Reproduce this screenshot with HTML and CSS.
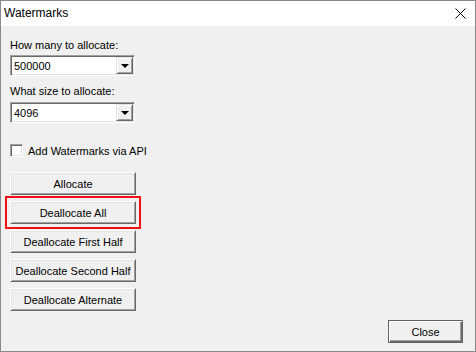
FILE: index.html
```html
<!DOCTYPE html>
<html>
<head>
    <meta charset="UTF-8">
    <title>Watermarks</title>
    <link rel="stylesheet" href="styles.css">
</head>
<body>
    <div class="window">
        <div class="titlebar">
            <span class="title">Watermarks</span>
            <svg class="closeX" width="11" height="11" viewBox="0 0 11 11">
                <path d="M0.5 0.5 L10.5 10.5 M10.5 0.5 L0.5 10.5" stroke="#000" stroke-width="1" fill="none"/>
            </svg>
        </div>
        <div class="client">
            <div class="label first">How many to allocate:</div>
            <div class="combo combo1">
                <span class="comboText">500000</span>
                <span class="dropBtn"><span class="arrow"></span></span>
            </div>
            <div class="label second">What size to allocate:</div>
            <div class="combo combo2">
                <span class="comboText">4096</span>
                <span class="dropBtn"><span class="arrow"></span></span>
            </div>
            <div class="checkRow">
                <span class="checkBox"></span>
                <span class="checkText">Add Watermarks via API</span>
            </div>
            <div class="btnList">
                <button class="winButton">Allocate</button>
                <button class="winButton marked">Deallocate All</button>
                <button class="winButton">Deallocate First Half</button>
                <button class="winButton">Deallocate Second Half</button>
                <button class="winButton">Deallocate Alternate</button>
            </div>
            <div class="footer">
                <button class="winButton closeButton">Close</button>
            </div>
        </div>
    </div>
</body>
</html>
```

FILE: styles.css
```css
body {
    margin: 0;
    background-color: #f0f0f0;
    font-family: "Liberation Sans", Arial, sans-serif;
    font-size: 11px;
    color: #000;
}
.window {
    width: 476px;
    height: 352px;
    box-sizing: border-box;
    border: 1px solid #8a8a8a;
    display: flex;
    flex-direction: column;
    background-color: #f0f0f0;
}
.titlebar {
    height: 25px;
    background-color: #fff;
    display: flex;
    align-items: center;
    justify-content: space-between;
    padding: 0 9px 0 3px;
}
.title {
    font-size: 12px;
    margin-top: -1px;
}
.closeX {
    margin-top: -1px;
}
.client {
    flex: 1;
    display: flex;
    flex-direction: column;
    padding: 13px 12px 8px 9px;
}
.label {
    line-height: 13px;
    height: 13px;
}
.label.second {
    margin-top: 9px;
}
.combo {
    width: 125px;
    height: 21px;
    box-sizing: border-box;
    background-color: #fff;
    border: 1px solid;
    border-color: #a0a0a0 #fff #fff #a0a0a0;
    box-shadow: inset 1px 1px #696969, inset -1px -1px #e3e3e3;
    display: flex;
    align-items: center;
    padding: 1px;
}
.combo1 {
    margin-top: 3px;
}
.combo2 {
    margin-top: 4px;
}
.comboText {
    flex: 1;
    padding-left: 2px;
    padding-top: 1px;
}
.dropBtn {
    width: 17px;
    height: 17px;
    box-sizing: border-box;
    background-color: #f0f0f0;
    border: 1px solid;
    border-color: #e3e3e3 #696969 #696969 #e3e3e3;
    box-shadow: inset 1px 1px #fff, inset -1px -1px #a0a0a0;
    display: flex;
    align-items: center;
    justify-content: center;
}
.arrow {
    width: 0;
    height: 0;
    border-left: 4px solid transparent;
    border-right: 4px solid transparent;
    border-top: 4px solid #000;
    margin-top: 1px;
}
.checkRow {
    margin-top: 21px;
    display: flex;
    align-items: center;
    height: 13px;
}
.checkBox {
    width: 13px;
    height: 13px;
    box-sizing: border-box;
    background-color: #fff;
    border: 1px solid;
    border-color: #a0a0a0 #fff #fff #a0a0a0;
    box-shadow: inset 1px 1px #696969, inset -1px -1px #e3e3e3;
}
.checkText {
    margin-left: 5px;
    padding-top: 1px;
}
.btnList {
    margin-top: 15px;
    display: flex;
    flex-direction: column;
    gap: 6px;
}
.winButton {
    width: 126px;
    height: 23px;
    box-sizing: border-box;
    font-family: "Liberation Sans", Arial, sans-serif;
    font-size: 11px;
    color: #000;
    background-color: #f0f0f0;
    border: 1px solid;
    border-color: #fff #696969 #696969 #fff;
    box-shadow: inset 1px 1px #e3e3e3, inset -1px -1px #a0a0a0;
    padding: 0;
    padding-top: 1px;
}
.winButton.marked {
    outline: 2px solid #ee1111;
    outline-offset: 3px;
}
.footer {
    margin-top: auto;
    display: flex;
    justify-content: flex-end;
}
.closeButton {
    width: 75px;
    border: 1px solid #646464;
    box-shadow: inset 1px 1px #fff, inset -1px -1px #696969, inset -2px -2px #a0a0a0;
}
```
